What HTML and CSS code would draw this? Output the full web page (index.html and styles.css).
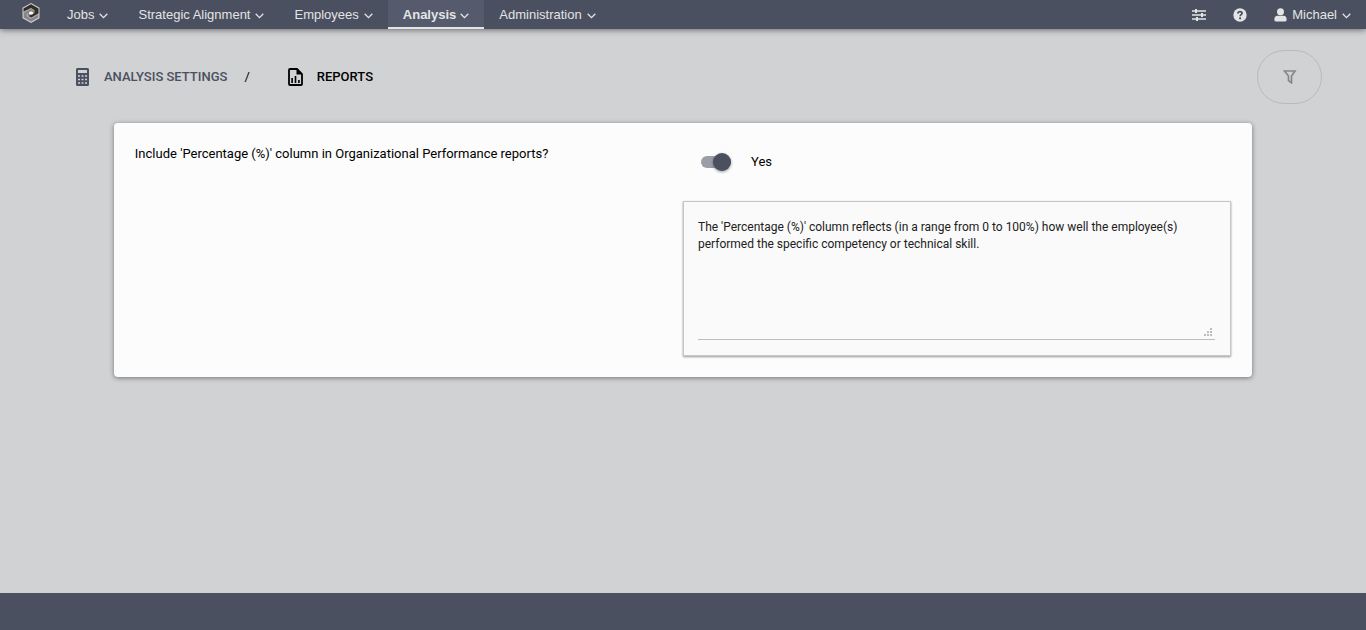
FILE: index.html
```html
<!DOCTYPE html>
<html lang="en">
<head>
<meta charset="utf-8">
<title>Analysis Settings / Reports</title>
<link rel="stylesheet" href="styles.css">
</head>
<body>
<svg class="defs" aria-hidden="true">
  <symbol id="chevron" viewBox="0 0 9 6"><path d="M0.7 0.8 4.5 4.6 8.3 0.8" fill="none" stroke="currentColor" stroke-width="1.3"/></symbol>
</svg>
<header class="topbar">
  <a class="brand" href="#" aria-label="Home">
    <svg width="18" height="20" viewBox="0 0 18 20">
      <path d="M9 0 17.5 4.8V15.2L9 20 .5 15.2V4.8Z" fill="#d0d0d0"/>
      <path d="M9 1.2 16.4 5.4V14.6L9 18.8 1.6 14.6V5.4Z" fill="#858689"/>
      <path d="M1.600 8.600V5.400L9 1.200 16.400 5.400V10.400L9.500 14.600 6.500 13 12.600 10.300V7.800L9 5.400Z" fill="#332e25"/>
      <path d="M1.600 9.200 9 5.400 12.600 7.800M5.300 10.500V13L9 15.300 16.400 11" fill="none" stroke="#bcbcbe" stroke-width=".8"/>
      <ellipse cx="9" cy="10" rx="2.200" ry="1.500" fill="#fff"/>
    </svg>
  </a>
  <nav class="menu">
    <a class="tab" href="#">Jobs <svg class="chev"><use href="#chevron"/></svg></a>
    <a class="tab" href="#">Strategic Alignment <svg class="chev"><use href="#chevron"/></svg></a>
    <a class="tab" href="#">Employees <svg class="chev"><use href="#chevron"/></svg></a>
    <a class="tab active" href="#" aria-current="page">Analysis <svg class="chev"><use href="#chevron"/></svg></a>
    <a class="tab" href="#">Administration <svg class="chev"><use href="#chevron"/></svg></a>
  </nav>
  <div class="tools">
    <button class="tool" type="button" aria-label="Preferences">
      <svg width="14" height="12" viewBox="0 0 14 12" fill="none" stroke="currentColor"><path d="M0 2H14M0 6H14M0 10H14" stroke-width="1.5"/><path d="M4 0V4M10 4V8M5 8V12" stroke-width="2"/></svg>
    </button>
    <button class="tool" type="button" aria-label="Help">
      <svg width="14" height="14" viewBox="0 0 14 14"><circle cx="7" cy="7" r="6.7" fill="currentColor"/><path d="M4.800 5.500C5 4.200 5.900 3.600 7 3.600 8.200 3.600 9.100 4.300 9.100 5.300 9.100 6.600 7.100 6.700 7.100 8.300" fill="none" stroke="#4a505f" stroke-width="1.700"/><circle cx="7.100" cy="10.300" r="1.100" fill="#4a505f"/></svg>
    </button>
    <button class="tool user" type="button">
      <svg width="13" height="14" viewBox="0 0 13 14" fill="currentColor"><circle cx="6.500" cy="3.700" r="3.500"/><path d="M3.500 7.800H9.500Q12.600 8.200 12.600 11V12Q12.600 13.400 11.200 13.400H1.800Q.4 13.400 .4 12V11Q.4 8.200 3.500 7.800Z"/></svg>
      Michael <svg class="chev"><use href="#chevron"/></svg>
    </button>
  </div>
</header>
<main class="content">
  <div class="heading">
    <nav class="crumbs" aria-label="Breadcrumb">
      <a class="crumb" href="#">
        <svg width="14" height="18" viewBox="0 0 14 18"><path fill="currentColor" fill-rule="evenodd" d="M1.500 0H11.500Q13 0 13 1.500V16.500Q13 18 11.500 18H1.500Q0 18 0 16.500V1.500Q0 0 1.500 0ZM2 2V5H11V2ZM2 7.200V8.800H4V7.200ZM5.500 7.200V8.800H7.500V7.200ZM9 7.200V8.800H11V7.200ZM2 10.700V12.300H4V10.700ZM5.500 10.700V12.300H7.500V10.700ZM9 10.700V12.300H11V10.700ZM2 14.200V15.800H4V14.200ZM5.500 14.200V15.800H7.500V14.200ZM9 14.200V15.800H11V14.200Z"/></svg>
        ANALYSIS SETTINGS
      </a>
      <span class="slash">/</span>
      <span class="crumb current" aria-current="page">
        <svg width="15" height="18" viewBox="0 0 15 18"><path d="M2 1H9L14 6V16Q14 17 13 17H2Q1 17 1 16V2Q1 1 2 1Z" fill="none" stroke="currentColor" stroke-width="1.800"/><path d="M8.500 1V6.500H14L9 1ZM3.300 10H4.900V15H3.300ZM6.700 8H8.300V15H6.700ZM10.100 12H11.700V15H10.100Z" fill="currentColor"/></svg>
        REPORTS
      </span>
    </nav>
    <button class="filter" type="button" aria-label="Filter">
      <svg width="14" height="14" viewBox="0 0 14 14"><path d="M1.500 1H12L8.500 6V12.800L5.500 10.500V6Z" fill="none" stroke="currentColor" stroke-width="1.700"/></svg>
    </button>
  </div>
  <section class="card">
    <label class="question" for="include">Include 'Percentage (%)' column in Organizational Performance reports?</label>
    <div class="answer">
      <label class="switch"><input id="include" type="checkbox" role="switch" checked> Yes</label>
      <div class="note">
        <textarea class="note-text" aria-label="Description">The 'Percentage (%)' column reflects (in a range from 0 to 100%) how well the employee(s) performed the specific competency or technical skill.</textarea>
        <svg class="grip" width="8" height="8" viewBox="0 0 8 8" aria-hidden="true"><path fill="#bdbdbd" d="M6 0h2v2H6zM3 3h2v2H3zM6 3h2v2H6zM0 6h2v2H0zM3 6h2v2H3zM6 6h2v2H6z"/></svg>
      </div>
    </div>
  </section>
</main>
<footer class="footer"></footer>
</body>
</html>
```

FILE: styles.css
```css
* { box-sizing: border-box; }
body {
  margin: 0;
  min-height: 100vh;
  display: flex;
  flex-direction: column;
  background: #d1d2d4;
  color: #000;
  font: 13px/20px Roboto, sans-serif;
}
a { color: inherit; text-decoration: none; }
button { border: 0; padding: 0; background: none; color: inherit; font: inherit; }
svg { display: block; flex: none; }
.defs { position: absolute; width: 0; height: 0; }
.topbar {
  display: flex;
  height: 29px;
  padding: 0 15px 0 22px;
  background: #4a505f;
  color: #e3e4e6;
  font: 13px/20px "Liberation Sans", Arial, sans-serif;
  box-shadow: 0 1px 6px rgba(0, 0, 0, .5);
}
.brand { display: flex; align-items: center; padding-bottom: 3px; margin-right: 12px; }
.menu { display: flex; }
.tab {
  display: flex;
  align-items: center;
  gap: 5px;
  padding: 2px 15px 0;
  border-bottom: 2px solid transparent;
}
.tab.active { background: #555b6c; border-color: #e3e4e6; font-weight: bold; gap: 4px; }
.chev { width: 9px; height: 6px; margin-top: 2px; }
.tools { display: flex; align-items: center; gap: 27px; margin-left: auto; }
.tool { display: flex; align-items: center; }
.user { gap: 5px; }
.content { flex: 1; }
.heading {
  display: flex;
  align-items: center;
  justify-content: space-between;
  padding: 21px 44px 19px 76px;
}
.crumbs { display: flex; align-items: center; font-weight: 500; }
.crumb { display: flex; align-items: center; gap: 14px; color: #4a505f; }
.crumb.current { color: #000; }
.slash { margin: 0 38px 0 17px; font-weight: 400; }
.filter {
  display: flex;
  align-items: center;
  justify-content: center;
  width: 65px;
  height: 54px;
  border: 1px solid #b9babc;
  border-radius: 27px;
  color: #86878b;
}
.card {
  display: grid;
  grid-template-columns: 1fr 1fr;
  width: 83.333%;
  margin: 0 auto;
  padding: 20px 21px;
  background: #fcfcfc;
  border-radius: 4px;
  box-shadow: 0 1px 5px rgba(0, 0, 0, .45);
}
.question { justify-self: start; align-self: start; line-height: 22px; }
.switch { display: flex; align-items: center; gap: 20px; height: 38px; margin: 0 0 20px 18px; width: max-content; }
.switch input {
  appearance: none;
  position: relative;
  width: 30px;
  height: 12px;
  margin: 0;
  border-radius: 6px;
  background: #9b9ea8;
}
.switch input::before {
  content: "";
  position: absolute;
  top: -3px;
  left: 0;
  width: 18px;
  height: 18px;
  border-radius: 50%;
  background: #4a505f;
  box-shadow: 0 1px 3px rgba(0, 0, 0, .4);
}
.switch input:checked::before { left: 12px; }
.note {
  position: relative;
  margin-bottom: 1px;
  padding: 15px 15px 15px 14px;
  background: #fafafa;
  border: 1px solid #c5c6c7;
  box-shadow: 0 1px 2px rgba(0, 0, 0, .4);
}
.note-text {
  display: block;
  width: 100%;
  height: 123px;
  padding: 2px 0;
  border: 0;
  border-bottom: 1px solid #bdbdbd;
  background: none;
  color: #212121;
  font: 12px/17px Roboto, sans-serif;
  resize: none;
  outline: 0;
}
.grip { position: absolute; right: 18px; bottom: 19px; }
.footer { height: 37px; background: #4a505f; }
```
